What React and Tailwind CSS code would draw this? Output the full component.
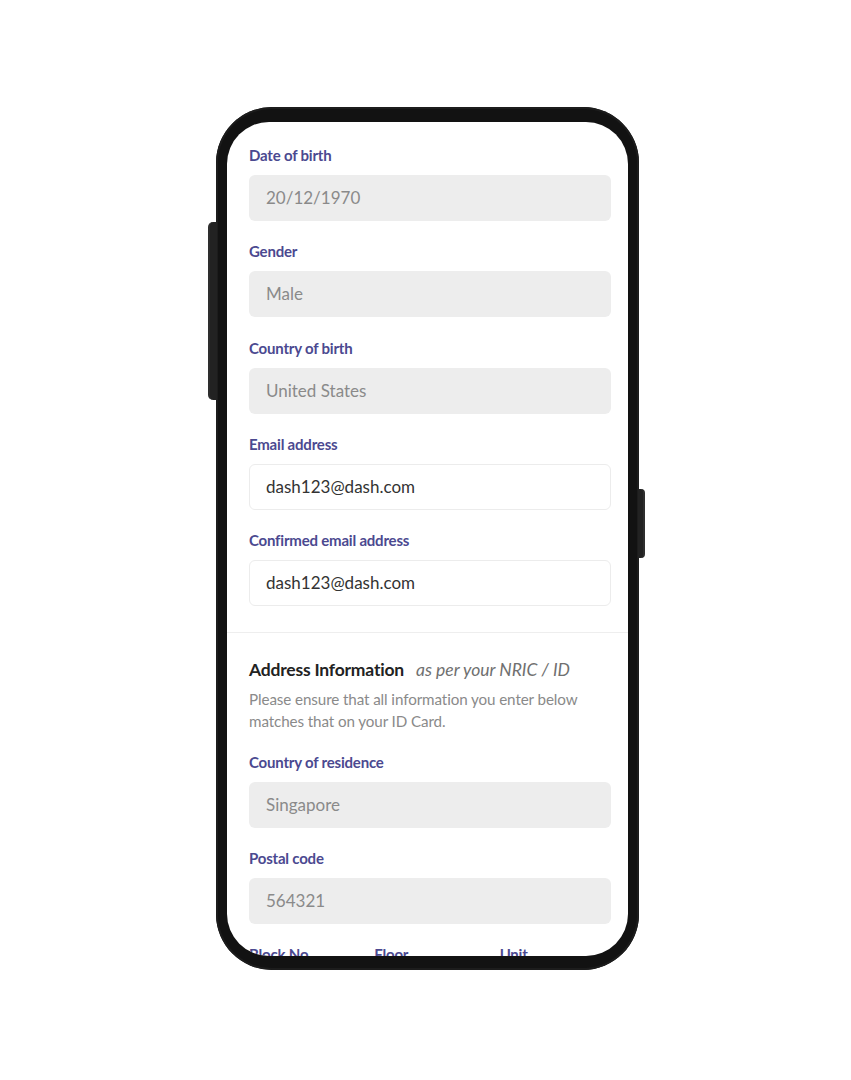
import React from "react";

function Label({ children }) {
  return (
    <div className="text-[15px] leading-[20px] font-bold text-[#4b4990] tracking-[-0.2px]">
      {children}
    </div>
  );
}

function ReadField({ label, value }) {
  return (
    <div className="flex flex-col gap-[10px]">
      <Label>{label}</Label>
      <div className="h-[46px] rounded-[6px] bg-[#ededed] flex items-center pl-[17px] text-[17px] text-[#8a8a8a]">
        {value}
      </div>
    </div>
  );
}

function EditField({ label, value }) {
  return (
    <div className="flex flex-col gap-[10px]">
      <Label>{label}</Label>
      <div className="h-[46px] rounded-[6px] bg-white border border-[#ececec] flex items-center pl-[16px] text-[17px] text-[#333333]">
        {value}
      </div>
    </div>
  );
}

export default function App() {
  return (
    <div
      className="w-[851px] h-[1080px] bg-white overflow-hidden"
      style={{ fontFamily: "Lato, 'Noto Sans', sans-serif" }}
    >
      <div className="pt-[107px] pl-[216px]">
        <div className="relative w-[423px] h-[863px] rounded-[56px] bg-[#121212] pt-[15px] pl-[11px] pr-[11px] pb-[14px] shadow-[inset_0_0_0_2px_#1c1c1c]">
          {/* side buttons */}
          <div className="absolute left-[-8px] top-[115px] w-[9px] h-[178px] rounded-l-[5px] bg-[#222222] border-l-[2px] border-[#2e2e2e]" />
          <div className="absolute right-[-6px] top-[382px] w-[7px] h-[69px] rounded-r-[4px] bg-[#222222] border-r-[2px] border-[#2e2e2e]" />

          <div className="h-full w-full rounded-[42px] bg-white overflow-hidden">
            <div className="pt-[23px] pl-[22px] pr-[17px] flex flex-col gap-[20px]">
              <ReadField label="Date of birth" value="20/12/1970" />
              <ReadField label="Gender" value="Male" />
              <div className="mt-px">
                <ReadField label="Country of birth" value="United States" />
              </div>
              <EditField label="Email address" value="dash123@dash.com" />
              <EditField label="Confirmed email address" value="dash123@dash.com" />
            </div>

            <div className="mt-[26px] h-px bg-[#eeeeee]" />

            <div className="pt-[25px] pl-[22px] pr-[17px]">
              <div className="flex items-baseline gap-[12px] leading-[24px]">
                <span className="text-[17.5px] font-bold text-[#222222] tracking-[-0.2px]">Address Information</span>
                <span className="text-[17.5px] italic text-[#707070]">as per your NRIC / ID</span>
              </div>
              <p className="mt-[6px] text-[15.2px] leading-[22px] text-[#8a8a8a] tracking-[-0.1px]">
                Please ensure that all information you enter below
                <br />
                matches that on your ID Card.
              </p>
              <div className="mt-[20px] flex flex-col gap-[20px]">
                <ReadField label="Country of residence" value="Singapore" />
                <ReadField label="Postal code" value="564321" />
                <div className="grid grid-cols-3 gap-[14px]">
                  <Label>Block No</Label>
                  <Label>Floor</Label>
                  <Label>Unit</Label>
                </div>
              </div>
            </div>
          </div>
        </div>
      </div>
    </div>
  );
}
